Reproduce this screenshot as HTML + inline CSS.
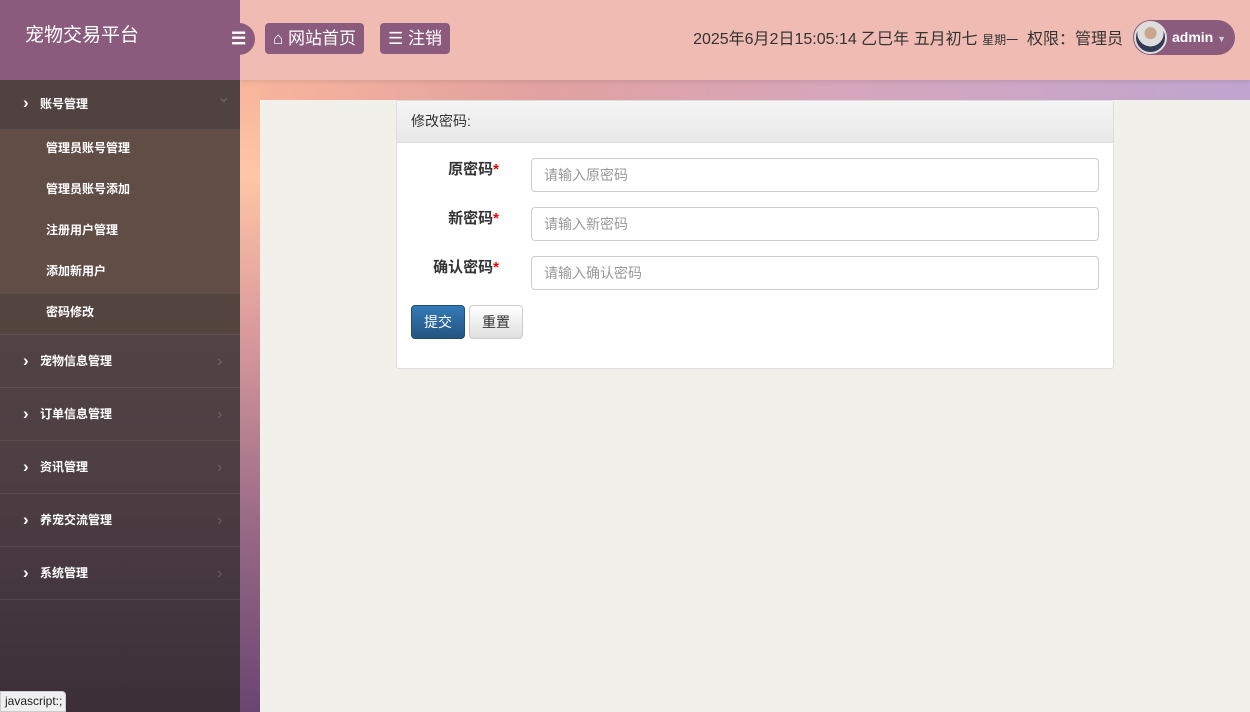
<!DOCTYPE html>
<html><head><meta charset="utf-8"><style>
*{margin:0;padding:0;box-sizing:border-box}
body{width:1250px;height:712px;overflow:hidden;font-family:"Liberation Sans","Noto Sans CJK SC",sans-serif;background:#f1f0ea;position:relative}
.bgl{position:absolute;left:240px;top:80px;width:20px;height:632px;background:linear-gradient(180deg,#f7b49a 0%,#ffc6a6 15%,#d99a9c 40%,#9a6a86 70%,#6a4572 100%)}
.bgt{position:absolute;left:240px;top:80px;width:1010px;height:20px;background:linear-gradient(90deg,#f9b59b 0%,#e0a1a0 30%,#d6a6bc 60%,#bfa5cf 100%)}
.hdr{position:absolute;left:240px;top:0;width:1010px;height:80px;background:#f0bbb2;box-shadow:0 2px 4px rgba(0,0,0,.08)}
.logo{position:absolute;left:0;top:0;width:240px;height:80px;background:#8b5b7e;color:#fff;font-size:19px;padding:20px 0 0 25px}
.tog{position:absolute;left:222px;top:23px;width:33px;height:32px;border-radius:0 16px 16px 0;background:#8b5b7e;color:#fff;font-size:17px;font-weight:bold;line-height:32px;padding-left:9px}
.btn{position:absolute;top:23px;height:31px;background:#8b5b7e;color:#fff;border-radius:4px;font-size:17px;line-height:31px;padding:0 8px}
.info{position:absolute;right:127px;top:25px;font-size:16px;color:#333}
.user{position:absolute;left:1133px;top:20px;width:102px;height:35px;border-radius:18px;background:#8b5b7e;color:#fff;font-weight:bold;font-size:14px;line-height:35px;padding-left:39px}
.av{position:absolute;left:1px;top:1px;width:33px;height:33px;border-radius:50%;background:radial-gradient(circle at 50% 35%,#c9a58e 0 25%,#ddd 26% 55%,#333a55 56%);border:2px solid #ddd}
.side{position:absolute;left:0;top:80px;width:240px;height:632px;background:linear-gradient(180deg,#5a4a47,#4d3f43 60%,#3d2f38)}
.m{height:53px;border-bottom:1px solid rgba(255,255,255,.07);color:#fff;font-size:12px;font-weight:bold;line-height:53px;padding-left:40px;position:relative}
.m:before{content:"›";position:absolute;left:23px;font-size:17px;top:-1px}
.m:after{content:"›";position:absolute;left:217px;color:rgba(255,255,255,.18);font-size:16px;font-weight:normal}
.m0{height:50px;line-height:48px;background:#504240}
.m0:after{content:"⌄";top:-6px}
.s{height:41px;line-height:37px;background:#5f4d46;color:#fff;font-size:12px;font-weight:bold;padding-left:46px}
.s.on{background:#544440;border-bottom:1px solid rgba(255,255,255,.07)}
.card{position:absolute;left:396px;top:100px;width:718px;height:269px;background:#fff;border:1px solid #ddd;border-radius:3px}
.ch{height:42px;background:linear-gradient(#f5f5f5,#e8e8e8);border-bottom:1px solid #ddd;font-size:14px;line-height:40px;padding-left:14px;color:#333}
.row{position:absolute;left:0;width:100%}
.lb{position:absolute;right:614px;top:0;font-weight:bold;font-size:15px;color:#333;white-space:nowrap}
.lb b{color:#e00}
.in{position:absolute;left:134px;width:568px;height:34px;border:1px solid #ccc;border-radius:4px;font-size:14px;color:#999;line-height:32px;padding-left:12px}
.b{position:absolute;top:204px;height:34px;border-radius:4px;font-size:14px;line-height:32px;padding:0 12px}
</style></head><body>
<div class="bgt"></div><div class="bgl"></div>
<div class="hdr"></div>
<div class="logo">宠物交易平台</div>
<div class="tog">☰</div>
<div class="btn" style="left:265px">⌂ 网站首页</div>
<div class="btn" style="left:380px">☰ 注销</div>
<div class="info">2025年6月2日15:05:14 乙巳年 五月初七 <span style="font-size:12px">星期一</span>&nbsp; 权限：管理员</div>
<div class="user"><div class="av"></div>admin <span style="color:#ccc;font-size:9px">▼</span></div>
<div class="side">
<div class="m m0">账号管理</div>
<div class="s">管理员账号管理</div><div class="s">管理员账号添加</div><div class="s">注册用户管理</div><div class="s">添加新用户</div><div class="s on">密码修改</div>
<div class="m">宠物信息管理</div><div class="m">订单信息管理</div><div class="m">资讯管理</div><div class="m">养宠交流管理</div><div class="m">系统管理</div>
</div>
<div style="position:absolute;left:0;top:691px;width:66px;height:21px;background:#f0f0f0;border:1px solid #ccc;border-radius:0 4px 0 0;font-size:12px;line-height:19px;padding-left:4px;color:#222">javascript:;</div>
<div class="card"><div class="ch">修改密码:</div>
<div class="row" style="top:57px"><div class="lb">原密码<b>*</b></div><div class="in">请输入原密码</div></div>
<div class="row" style="top:106px"><div class="lb">新密码<b>*</b></div><div class="in">请输入新密码</div></div>
<div class="row" style="top:155px"><div class="lb">确认密码<b>*</b></div><div class="in">请输入确认密码</div></div>
<div class="b" style="left:14px;background:linear-gradient(#337ab7,#245580);color:#fff;border:1px solid #204d74">提交</div>
<div class="b" style="left:72px;background:linear-gradient(#fff,#e0e0e0);border:1px solid #ccc;color:#333">重置</div>
</div>
</body></html>
